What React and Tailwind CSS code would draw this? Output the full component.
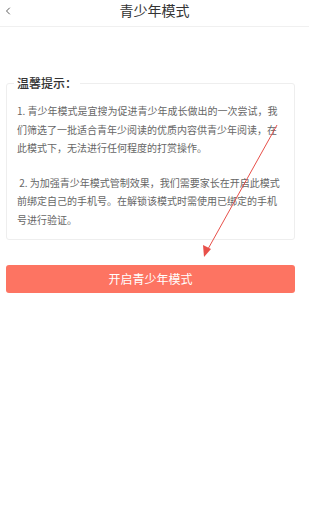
import { ChevronLeft } from "lucide-react";

const tips = [
  "1. 青少年模式是宜搜为促进青少年成长做出的一次尝试，我们筛选了一批适合青年少阅读的优质内容供青少年阅读，在此模式下，无法进行任何程度的打赏操作。",
  " 2. 为加强青少年模式管制效果，我们需要家长在开启此模式前绑定自己的手机号。在解锁该模式时需使用已绑定的手机号进行验证。",
];

const App = () => {
  return (
    <div
      className="relative w-[309px] h-[509px] bg-white overflow-hidden"
      style={{ fontFamily: '"Noto Sans CJK SC", "Noto Sans", sans-serif' }}
    >
      {/* Header */}
      <header className="relative h-[27px] border-b border-[#f0f0f0] flex items-center justify-center">
        <ChevronLeft className="absolute left-[2px] top-[4px] w-[12px] h-[14px] text-[#333]" strokeWidth={1.6} />
        <h1 className="text-[14px] leading-none text-[#333] -mt-[6px]">青少年模式</h1>
      </header>

      <main className="px-[6px] pt-[50px]">
        <fieldset className="border border-[#eeeeee] rounded-[3px] pl-[10px] pr-[10px] pb-[10px] w-[289px]">
          <legend className="-ml-[3px] px-[3px] text-[12px] font-medium text-[#333] leading-none">
            温馨提示：
          </legend>
          <div className="pt-[13px] text-[10px] leading-[18.5px] text-[#666] flex flex-col gap-[16px]">
            {tips.map((t, i) => (
              <p key={i} className="whitespace-pre-wrap">{t}</p>
            ))}
          </div>
        </fieldset>

        <button className="mt-[25px] w-[289px] h-[28px] rounded-[3px] bg-[#fd7462] text-white text-[12px]">
          开启青少年模式
        </button>
      </main>

      {/* annotation arrow */}
      <svg className="absolute left-0 top-0 pointer-events-none" width="309" height="509">
        <line x1="277" y1="125" x2="208" y2="249" stroke="#e8504a" strokeWidth="1" />
        <polygon points="204,257 203,245 211,249" fill="#e8504a" />
      </svg>
    </div>
  );
};

export default App;
